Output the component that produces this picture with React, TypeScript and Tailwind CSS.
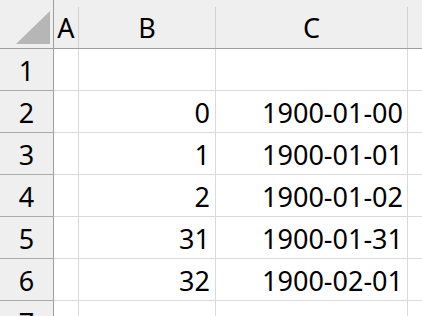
const rows: { n: number; b: string; c: string }[] = [
  { n: 1, b: "", c: "" },
  { n: 2, b: "0", c: "1900-01-00" },
  { n: 3, b: "1", c: "1900-01-01" },
  { n: 4, b: "2", c: "1900-01-02" },
  { n: 5, b: "31", c: "1900-01-31" },
  { n: 6, b: "32", c: "1900-02-01" },
  { n: 7, b: "", c: "" },
];

const App = () => {
  return (
    <div
      className="w-[422px] h-[316px] overflow-hidden bg-white text-black text-[27px] leading-none"
      style={{ fontFamily: '"Noto Sans", "Open Sans", sans-serif' }}
    >
      {/* column headers */}
      <div className="flex h-[49px] bg-[#efefef] border-b border-[#9e9e9e]">
        {/* select-all corner */}
        <div className="w-[54px] shrink-0 border-r border-[#9e9e9e] relative">
          <svg width="54" height="48" className="absolute left-0 top-0">
            <polygon points="16,44 50,44 50,11" fill="#b6b6b6" />
          </svg>
        </div>
        <div className="w-[25px] shrink-0 mt-[7px] border-r border-[#d2d2d2] flex items-center justify-center">
          A
        </div>
        <div className="w-[137px] shrink-0 mt-[7px] border-r border-[#d2d2d2] flex items-center justify-center">
          B
        </div>
        <div className="w-[192px] shrink-0 mt-[7px] border-r border-[#d2d2d2] flex items-center justify-center">
          C
        </div>
        <div className="flex-1" />
      </div>

      {/* rows */}
      {rows.map((row) => (
        <div key={row.n} className="flex h-[42px]">
          <div className="w-[54px] shrink-0 bg-[#efefef] border-r border-b border-r-[#9e9e9e] border-b-[#ababab] flex items-center justify-center pt-[1px]">
            {row.n}
          </div>
          <div className="w-[25px] shrink-0 border-r border-b border-[#dadada]" />
          <div className="w-[137px] shrink-0 border-r border-b border-[#dadada] flex items-center justify-end pr-[5px] pt-[1px]">
            {row.b}
          </div>
          <div className="w-[192px] shrink-0 border-r border-b border-[#dadada] flex items-center justify-end pr-[4px] pt-[1px]">
            {row.c}
          </div>
          <div className="flex-1 border-b border-[#dadada]" />
        </div>
      ))}
    </div>
  );
};

export default App;
